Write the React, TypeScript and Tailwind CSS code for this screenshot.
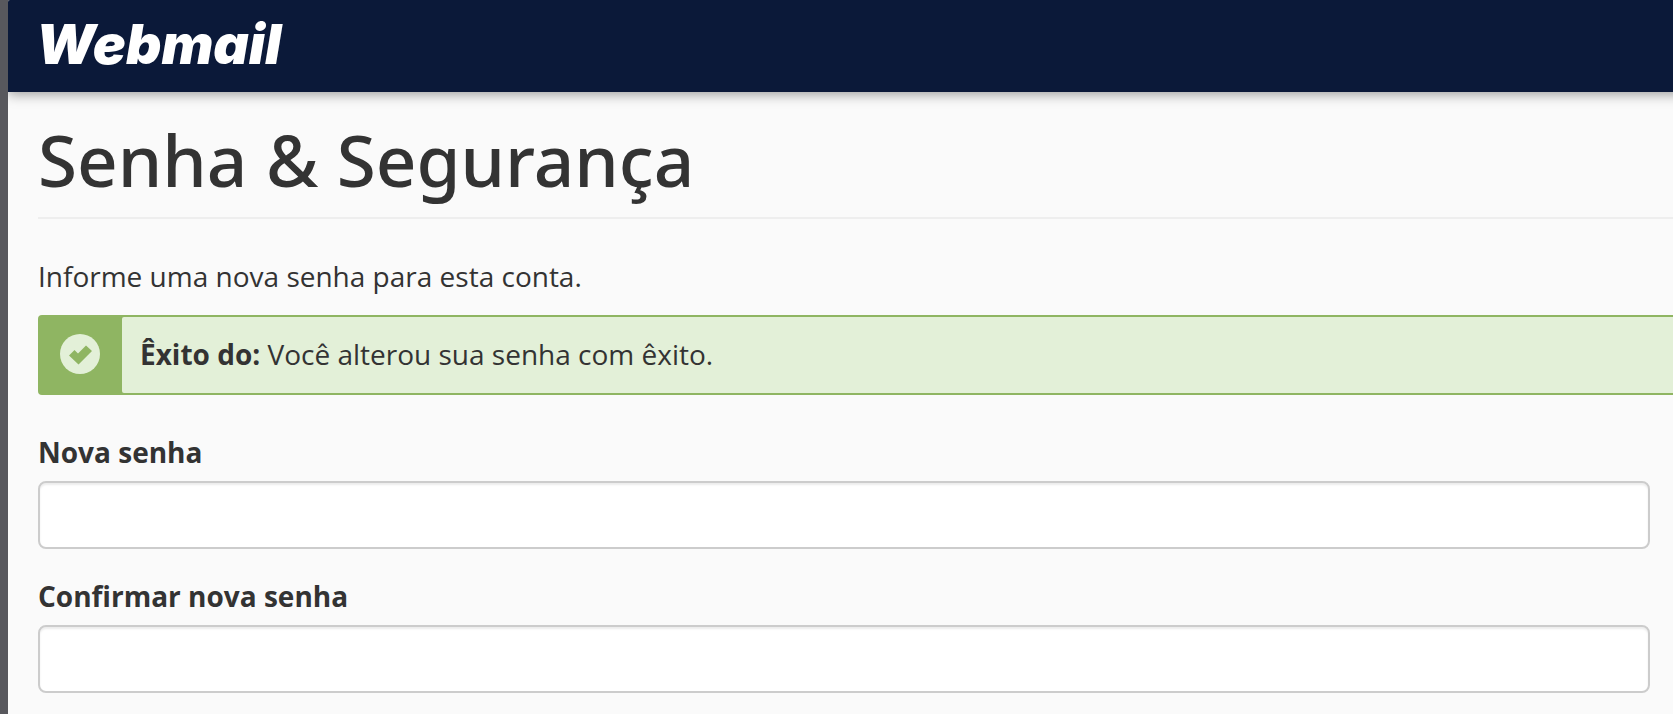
import { useState } from 'react';

const fields = [
    { id: 'new-password', label: 'Nova senha' },
    { id: 'confirm-password', label: 'Confirmar nova senha' },
];

function SuccessIcon() {
    return (
        <svg viewBox="0 0 40 40" className="w-10 h-10" aria-hidden="true">
            <circle cx="20" cy="20" r="20" fill="#e3f0d8" />
            <path d="M9 21.5 14.5 16 18 19.5 26 11.5 32 17 18.5 30.5Z" fill="#8fb562" />
        </svg>
    );
}

function Header() {
    return (
        <header className="flex items-center h-23 -mr-4 pl-7 pb-1 bg-[#0b1939] shadow-[0_2px_12px_rgba(0,0,0,0.4)]">
            <a href="#" className="font-['Inter',sans-serif] text-[55px] leading-none font-black italic text-white">Webmail</a>
        </header>
    );
}

function SuccessAlert() {
    return (
        <div role="alert" className="flex h-20 mt-[19px] rounded-l border-2 border-r-0 border-[#8fb562] bg-[#8fb562]">
            <div className="flex items-center justify-center w-[82px] pr-0.5 pb-0.5 shrink-0">
                <SuccessIcon />
            </div>
            <div className="flex-1 flex items-center pl-[18px] pb-0.5 rounded-l-xs bg-[#e3f0d8]">
                <p><strong className="font-bold">Êxito do:</strong> Você alterou sua senha com êxito.</p>
            </div>
        </div>
    );
}

export default function App() {
    const [values, setValues] = useState<Record<string, string>>({});

    return (
        <div className="flex min-h-screen bg-[#58585d] font-['Open_Sans',sans-serif] text-[28px] leading-10 text-[#333333]">
            <div className="flex-1 min-w-0 ml-2 rounded-tl-xs overflow-hidden bg-[#fafafa]">
                <Header />
                <main className="pl-[30px] pt-7">
                    <h1 className="pb-[18px] border-b-2 border-[#eeeeee] font-['Noto_Sans',sans-serif] text-[71px] leading-[79px] font-medium">Senha &amp; Segurança</h1>
                    <p className="mt-[37px]">Informe uma nova senha para esta conta.</p>
                    <SuccessAlert />
                    <form className="flex flex-col gap-[27px] mt-[37px] pr-[23px]">
                        {fields.map(f => (
                            <div key={f.id}>
                                <label htmlFor={f.id} className="block font-bold">{f.label}</label>
                                <input
                                    id={f.id}
                                    type="password"
                                    value={values[f.id] || ''}
                                    onChange={e => setValues({ ...values, [f.id]: e.target.value })}
                                    className="block w-full h-17 mt-[9px] px-6 rounded-lg border-2 border-[#cccccc] bg-white shadow-[inset_0_2px_2px_rgba(0,0,0,0.075)]"
                                />
                            </div>
                        ))}
                    </form>
                </main>
            </div>
        </div>
    );
}
